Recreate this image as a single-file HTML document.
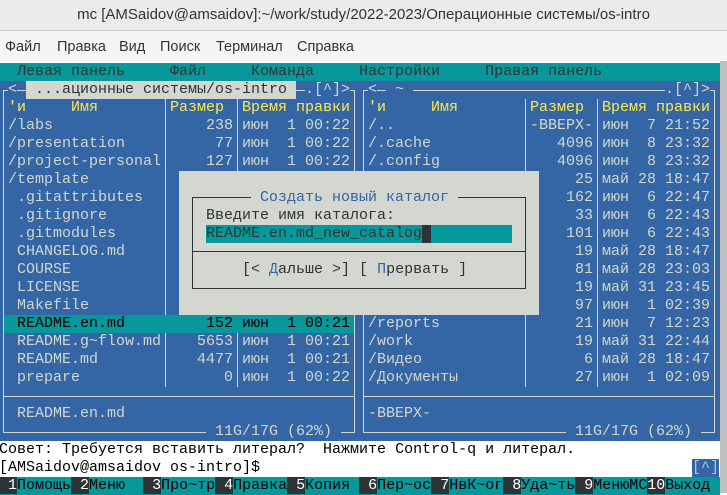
<!DOCTYPE html>
<html><head><meta charset="utf-8"><style>
*{margin:0;padding:0;box-sizing:border-box}
body{width:727px;height:493px;overflow:hidden;background:#fff;position:relative;font-family:"Liberation Sans","DejaVu Sans",sans-serif}
#title{position:absolute;left:0;top:0;width:727px;height:31px;background:#ebebeb;border-bottom:1px solid #c8c8c8;text-align:center;font-size:15px;line-height:30px;color:#2e3436}
#menu{position:absolute;left:0;top:31px;width:727px;height:30px;background:#f6f5f4;font-size:14.5px;line-height:32px;color:#2e3436}
#menu span{position:absolute;top:0}
#term{position:absolute;left:-1px;top:63px;width:720px;height:432px;background:#fff}
#sb{position:absolute;left:720px;top:61px;width:7px;height:432px;background:#c0c0c0}
.t{position:absolute;white-space:pre;font:15px/18px "Liberation Mono","DejaVu Sans Mono",monospace;height:18px}
.bg{position:absolute}
.l{position:absolute;background:#d3d7cf}
.y{color:#fce94f}.w{color:#d3d7cf}.k{color:#000}
</style></head><body>
<div id="title">mc [AMSaidov@amsaidov]:~/work/study/2022-2023/Операционные системы/os-intro</div>
<div id="menu"><span style="left:5px">Файл</span><span style="left:57px">Правка</span><span style="left:119px">Вид</span><span style="left:160px">Поиск</span><span style="left:216px">Терминал</span><span style="left:297px">Справка</span></div>
<div id="sb"></div>
<div id="term">
<!-- menu row -->
<div class="bg" style="left:0;top:0;width:721px;height:18px;background:#06989a"></div>
<div class="t k" style="left:18px;top:0;color:#2e3436">Левая панель     Файл     Команда     Настройки     Правая панель</div>
<!-- panels bg -->
<div class="bg" style="left:0;top:18px;width:721px;height:360px;background:#3465a4"></div>
<!-- borders -->
<div class="l" style="left:4px;top:27px;width:352px;height:1px"></div>
<div class="l" style="left:4px;top:27px;width:1px;height:343px"></div>
<div class="l" style="left:355px;top:27px;width:1px;height:343px"></div>
<div class="l" style="left:4px;top:369px;width:352px;height:1px"></div>
<div class="l" style="left:4px;top:333px;width:352px;height:1px"></div>
<div class="l" style="left:166px;top:36px;width:1px;height:288px"></div>
<div class="l" style="left:238px;top:36px;width:1px;height:288px"></div>
<div class="l" style="left:364px;top:27px;width:352px;height:1px"></div>
<div class="l" style="left:364px;top:27px;width:1px;height:343px"></div>
<div class="l" style="left:715px;top:27px;width:1px;height:343px"></div>
<div class="l" style="left:364px;top:369px;width:352px;height:1px"></div>
<div class="l" style="left:364px;top:333px;width:352px;height:1px"></div>
<div class="l" style="left:526px;top:36px;width:1px;height:288px"></div>
<div class="l" style="left:598px;top:36px;width:1px;height:288px"></div>
<!-- top border texts -->
<div class="t w" style="left:9px;top:18px;background:#3465a4">&lt;</div>
<div class="t" style="left:27px;top:18px;background:#d3d7cf;color:#2e3436"> ...ационные системы/os-intro </div>
<div class="t w" style="left:306px;top:18px;background:#3465a4">.[^]&gt;</div>
<div class="t w" style="left:369px;top:18px;background:#3465a4">&lt;</div>
<div class="t w" style="left:387px;top:18px;background:#3465a4"> ~ </div>
<div class="t w" style="left:666px;top:18px;background:#3465a4">.[^]&gt;</div>
<!-- headers -->
<div class="t y" style="left:9px;top:36px">'и</div><div class="t y" style="left:72px;top:36px">Имя</div>
<div class="t y" style="left:171px;top:36px">Размер</div><div class="t y" style="left:243px;top:36px">Время правки</div>
<div class="t y" style="left:369px;top:36px">'и</div><div class="t y" style="left:432px;top:36px">Имя</div>
<div class="t y" style="left:531px;top:36px">Размер</div><div class="t y" style="left:603px;top:36px">Время правки</div>
<!-- selected row -->
<div class="bg" style="left:5px;top:252px;width:350px;height:18px;background:#06989a"></div>
<!-- left files -->
<div class="t w" style="left:9px;top:54px">/labs
/presentation
/project-personal
/template
 .gitattributes
 .gitignore
 .gitmodules
 CHANGELOG.md
 COURSE
 LICENSE
 Makefile</div>
<div class="t k" style="left:9px;top:252px"> README.en.md</div>
<div class="t w" style="left:9px;top:270px"> README.g~flow.md
 README.md
 prepare</div>
<div class="t w" style="left:171px;top:54px">    238
     77
    127</div>
<div class="t w" style="left:243px;top:54px">июн  1 00:22
июн  1 00:22
июн  1 00:22</div>
<div class="t k" style="left:171px;top:252px">    152</div><div class="t k" style="left:243px;top:252px">июн  1 00:21</div>
<div class="t w" style="left:171px;top:270px">   5653
   4477
      0</div>
<div class="t w" style="left:243px;top:270px">июн  1 00:21
июн  1 00:21
июн  1 00:22</div>
<!-- right files -->
<div class="t w" style="left:369px;top:54px">/..
/.cache
/.config</div>
<div class="t w" style="left:369px;top:252px">/reports
/work
/Видео
/Документы</div>
<div class="t w" style="left:531px;top:54px">-ВВЕРХ-
   4096
   4096
     25
    162
     33
    101
     19
     81
     19
     97
     21
     19
      6
     27</div>
<div class="t w" style="left:603px;top:54px">июн  7 21:52
июн  8 23:32
июн  8 23:32
май 28 18:47
июн  6 22:47
июн  6 22:43
июн  6 22:43
май 28 18:47
май 28 23:03
май 31 23:45
июн  1 02:39
июн  7 12:23
май 31 22:44
май 28 18:47
июн  1 02:09</div>
<!-- mini status -->
<div class="t w" style="left:9px;top:342px"> README.en.md</div>
<div class="t w" style="left:369px;top:342px">-ВВЕРХ-</div>
<div class="t w" style="left:207px;top:360px;background:#3465a4"> 11G/17G (62%) </div>
<div class="t w" style="left:567px;top:360px;background:#3465a4"> 11G/17G (62%) </div>
<!-- dialog -->
<div class="bg" style="left:180px;top:108px;width:360px;height:144px;background:#d3d7cf"></div>
<div class="bg" style="left:193px;top:134px;width:334px;height:92px;border:1px solid #2e3436"></div>
<div class="bg" style="left:193px;top:188px;width:334px;height:1px;background:#2e3436"></div>
<div class="t" style="left:252px;top:126px;background:#d3d7cf;color:#3465a4"> Создать новый каталог </div>
<div class="t" style="left:207px;top:144px;color:#2e3436">Введите имя каталога:</div>
<div class="bg" style="left:207px;top:162px;width:306px;height:18px;background:#06989a"></div>
<div class="t" style="left:207px;top:162px;color:#2e3436">README.en.md_new_catalog</div>
<div class="bg" style="left:423px;top:162px;width:9px;height:18px;background:#2e3436"></div>
<div class="t" style="left:243px;top:198px;color:#2e3436">[&lt; <span style="color:#3465a4">Д</span>альше &gt;] [ <span style="color:#3465a4">П</span>рервать ]</div>
<!-- hint & prompt -->
<div class="t" style="left:0;top:378px;color:#000">Совет: Требуется вставить литерал?  Нажмите Control-q и литерал.</div>
<div class="t" style="left:0;top:396px;color:#000">[AMSaidov@amsaidov os-intro]$</div>
<div class="t" style="left:693px;top:396px;background:#3465a4;color:#a8c4e8">[^]</div>
<!-- keybar -->
<div class="bg" style="left:0;top:414px;width:721px;height:18px;background:#06989a"></div>
<div class="t" style="left:0;top:414px;color:#000"><span style="background:#2e3436;color:#fff"> 1</span>Помощь<span style="background:#2e3436;color:#fff"> 2</span>Меню  <span style="background:#2e3436;color:#fff"> 3</span>Про~тр<span style="background:#2e3436;color:#fff"> 4</span>Правка<span style="background:#2e3436;color:#fff"> 5</span>Копия <span style="background:#2e3436;color:#fff"> 6</span>Пер~ос<span style="background:#2e3436;color:#fff"> 7</span>НвК~ог<span style="background:#2e3436;color:#fff"> 8</span>Уда~ть<span style="background:#2e3436;color:#fff"> 9</span>МенюMC<span style="background:#2e3436;color:#fff">10</span>Выход </div>
</div>
</body></html>
